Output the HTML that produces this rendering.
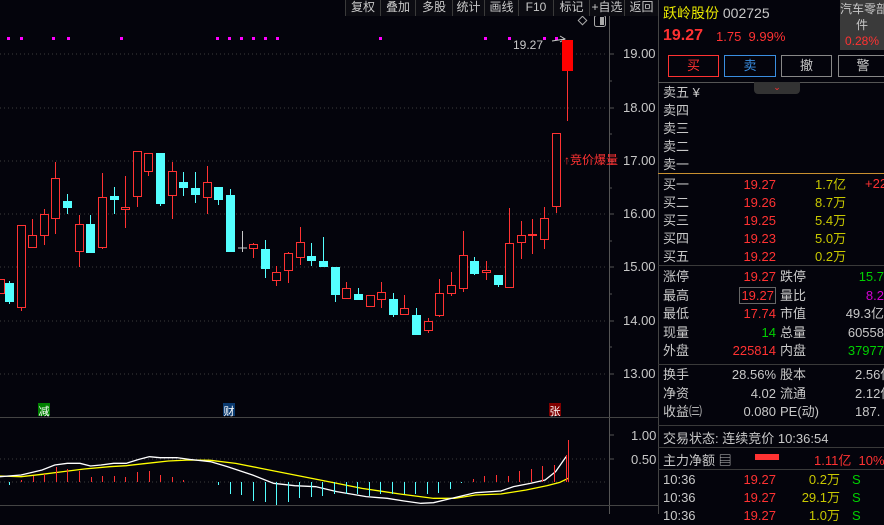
<!DOCTYPE html><html><head><meta charset="utf-8"><style>
*{margin:0;padding:0;box-sizing:border-box}
body{width:884px;height:514px;background:#04040c;overflow:hidden;position:relative;font-family:"Liberation Sans","Noto Sans CJK SC",sans-serif;font-size:13px;color:#c8c8c8}
.a{position:absolute;white-space:nowrap}
.tb{position:absolute;top:0;height:16px;font-size:12px;line-height:15px;text-align:center;color:#c8c8c8;border-left:1px solid #3a3a3a;background:#0c0c12}
.r{color:#ff3232}.g{color:#00d000}.y{color:#c8c800}
.ln{position:absolute;left:658px;width:226px;height:1px;background:#3a3a3a}
.rt{text-align:right}
</style></head><body>
<svg class="a" style="left:0;top:0" width="660" height="514">
<g stroke="#3c3c3c" stroke-dasharray="1,3">
<line x1="0" y1="54" x2="608" y2="54"/><line x1="0" y1="108" x2="608" y2="108"/><line x1="0" y1="161" x2="608" y2="161"/><line x1="0" y1="214" x2="608" y2="214"/><line x1="0" y1="267" x2="608" y2="267"/><line x1="0" y1="321" x2="608" y2="321"/><line x1="0" y1="374" x2="608" y2="374"/>
<line x1="0" y1="482" x2="608" y2="482"/><line x1="0" y1="459" x2="608" y2="459"/>
</g>
<line x1="609.5" y1="16" x2="609.5" y2="514" stroke="#555"/>
<line x1="0" y1="417.5" x2="658" y2="417.5" stroke="#444"/>
<line x1="0" y1="505.5" x2="658" y2="505.5" stroke="#444"/>
<g stroke="#555"><line x1="609" y1="54" x2="614" y2="54"/><line x1="609" y1="81" x2="612" y2="81"/><line x1="609" y1="108" x2="614" y2="108"/><line x1="609" y1="134" x2="612" y2="134"/><line x1="609" y1="161" x2="614" y2="161"/><line x1="609" y1="188" x2="612" y2="188"/><line x1="609" y1="214" x2="614" y2="214"/><line x1="609" y1="241" x2="612" y2="241"/><line x1="609" y1="267" x2="614" y2="267"/><line x1="609" y1="294" x2="612" y2="294"/><line x1="609" y1="321" x2="614" y2="321"/><line x1="609" y1="347" x2="612" y2="347"/><line x1="609" y1="374" x2="614" y2="374"/><line x1="609" y1="435" x2="614" y2="435"/><line x1="609" y1="459" x2="614" y2="459"/></g>
<g fill="#ff00ff"><rect x="7" y="37" width="3" height="3"/><rect x="20" y="37" width="3" height="3"/><rect x="52" y="37" width="3" height="3"/><rect x="67" y="37" width="3" height="3"/><rect x="120" y="37" width="3" height="3"/><rect x="216" y="37" width="3" height="3"/><rect x="228" y="37" width="3" height="3"/><rect x="240" y="37" width="3" height="3"/><rect x="252" y="37" width="3" height="3"/><rect x="264" y="37" width="3" height="3"/><rect x="276" y="37" width="3" height="3"/><rect x="379" y="37" width="3" height="3"/><rect x="484" y="37" width="3" height="3"/><rect x="508" y="37" width="3" height="3"/><rect x="543" y="37" width="3" height="3"/><rect x="555" y="37" width="3" height="3"/></g>
<svg x="0" y="395" width="660" height="119" viewBox="0 0 1568 357" preserveAspectRatio="none">
<polyline fill="none" stroke="#ffff00" stroke-width="1.3" vector-effect="non-scaling-stroke" points="0,243 50,245 100,238 150,230 200,222 260,215 300,212 350,205 400,198 450,195 500,196 560,205 620,220 700,240 780,260 860,280 950,297 1030,310 1080,310 1130,300 1190,297 1250,285 1300,272 1330,262 1350,250"/>
<polyline fill="none" stroke="#ffffff" stroke-width="1.3" vector-effect="non-scaling-stroke" points="0,245 50,240 100,225 130,210 160,205 190,205 215,213 240,210 270,205 300,205 330,193 355,185 380,188 420,188 450,193 500,200 540,215 600,240 650,265 700,272 750,275 800,290 870,305 920,310 960,318 1000,325 1030,323 1080,308 1130,293 1190,288 1220,275 1260,265 1295,255 1320,230 1345,185"/>
</svg>
<path d="M552 41 L565 39 M560 36 L565 39 L560 42" stroke="#c8c8c8" fill="none"/>
<rect x="579.5" y="17.5" width="6" height="6" transform="rotate(45 582.5 20.5)" fill="none" stroke="#aaa"/>
<rect x="594.5" y="15.5" width="11" height="11" rx="2" fill="none" stroke="#aaa"/><rect x="600" y="17" width="4" height="8" fill="#aaa"/>
</svg>
<div id="cc" class="a" style="left:0;top:0;width:660px;height:514px"></div>
<div class="tb" style="left:345px;width:35px">复权</div><div class="tb" style="left:380px;width:35px">叠加</div><div class="tb" style="left:415px;width:37px">多股</div><div class="tb" style="left:452px;width:32px">统计</div><div class="tb" style="left:484px;width:34px">画线</div><div class="tb" style="left:518px;width:35px">F10</div><div class="tb" style="left:553px;width:36px">标记</div><div class="tb" style="left:589px;width:35px">+自选</div><div class="tb" style="left:624px;width:34px">返回</div>
<div class="a" style="left:513px;top:38px;font-size:12px">19.27</div>
<div class="a r" style="left:564px;top:151px;font-size:12px">↑竞价爆量</div>
<div class="a" style="left:623px;top:46px">19.00</div><div class="a" style="left:623px;top:100px">18.00</div><div class="a" style="left:623px;top:153px">17.00</div><div class="a" style="left:623px;top:206px">16.00</div><div class="a" style="left:623px;top:259px">15.00</div><div class="a" style="left:623px;top:313px">14.00</div><div class="a" style="left:623px;top:366px">13.00</div>
<div class="a" style="left:631px;top:428px">1.00</div><div class="a" style="left:631px;top:452px">0.50</div>
<div class="a" style="left:38px;top:403px;width:12px;height:13px;background:#008000;color:#fff;font-size:11px;text-align:center">减</div>
<div class="a" style="left:223px;top:403px;width:12px;height:13px;background:#0a3a70;color:#fff;font-size:11px;text-align:center">财</div>
<div class="a" style="left:549px;top:403px;width:12px;height:13px;background:#800000;color:#fff;font-size:11px;text-align:center">张</div>
<div class="a" style="left:658px;top:0;width:1px;height:514px;background:#444"></div>
<div class="a" style="left:663px;top:3px;font-size:14px;color:#e8e800">跃岭股份 <span style="color:#c8c8c8">002725</span></div>
<div class="a" style="left:840px;top:0;width:44px;height:50px;background:#3a3a3a;font-size:12px;text-align:center;line-height:16px;padding-top:1px;overflow:hidden">汽车零部<br>件<br><span class="r">0.28%</span></div>
<div class="a r" style="left:663px;top:27px;font-size:16px;font-weight:bold">19.27</div>
<div class="a r" style="left:716px;top:29px;font-size:13px">1.75&nbsp;&nbsp;9.99%</div>
<div class="a r" style="left:668px;top:55px;width:51px;height:22px;border:1px solid #ff3232;text-align:center;line-height:20px">买</div>
<div class="a" style="left:724px;top:55px;width:52px;height:22px;border:1px solid #3a8ee0;text-align:center;line-height:20px;color:#3a8ee0">卖</div>
<div class="a" style="left:781px;top:55px;width:51px;height:22px;border:1px solid #888;text-align:center;line-height:20px">撤</div>
<div class="a" style="left:838px;top:55px;width:50px;height:22px;border:1px solid #888;text-align:center;line-height:20px">警</div>
<div class="ln" style="top:82px;background:#555"></div>
<div class="a" style="left:754px;top:82px;width:46px;height:12px;background:#333;border-radius:0 0 4px 4px;color:#ff3232;font-size:9px;text-align:center;line-height:10px">⌄</div>
<div class="a" style="left:663px;top:84px;line-height:18px">卖五 ¥<br>卖四<br>卖三<br>卖二<br>卖一</div>
<div class="ln" style="top:173px;background:#c89030"></div>
<div class="a" style="left:663px;top:176px;line-height:18px">买一<br>买二<br>买三<br>买四<br>买五</div>
<div class="a r rt" style="left:720px;top:176px;width:56px;line-height:18px">19.27<br>19.26<br>19.25<br>19.23<br>19.22</div>
<div class="a y" style="left:815px;top:176px;line-height:18px">1.7亿<br>8.7万<br>5.4万<br>5.0万<br>0.2万</div>
<div class="a r" style="left:865px;top:176px">+22</div>
<div class="ln" style="top:265px"></div>
<div class="a" style="left:663px;top:268px;line-height:18.5px">涨停<br>最高<br>最低<br>现量<br>外盘</div>
<div class="a rt" style="left:700px;top:268px;width:76px;line-height:18.5px"><span class="r">19.27</span><br><span class="r" style="border:1px solid #666;padding:0 1px">19.27</span><br><span class="r">17.74</span><br><span class="g">14</span><br><span class="r">225814</span></div>
<div class="a" style="left:780px;top:268px;line-height:18.5px">跌停<br>量比<br>市值<br>总量<br>内盘</div>
<div class="a" style="left:845px;top:268px;line-height:18.5px;width:39px;overflow:hidden;text-align:right"><span class="g">15.7</span><br><span style="color:#d000d0">8.2</span><br>49.3亿<br>60558<br><span class="g">37977</span></div>
<div class="ln" style="top:364px"></div>
<div class="a" style="left:663px;top:366px;line-height:18.5px">换手<br>净资<br>收益㈢</div>
<div class="a rt" style="left:700px;top:366px;width:76px;line-height:18.5px">28.56%<br>4.02<br>0.080</div>
<div class="a" style="left:780px;top:366px;line-height:18.5px">股本<br>流通<br>PE(动)</div>
<div class="a" style="left:855px;top:366px;line-height:18.5px">2.56亿<br>2.12亿<br>187.</div>
<div class="ln" style="top:425px"></div>
<div class="a" style="left:663px;top:428px">交易状态: 连续竞价 10:36:54</div>
<div class="ln" style="top:447px"></div>
<div class="a" style="left:663px;top:450px">主力净额 ▤</div>
<div class="a" style="left:755px;top:454px;width:24px;height:6px;background:#ff3232"></div>
<div class="a r" style="left:814px;top:450px">1.11亿&nbsp;&nbsp;10%</div>
<div class="ln" style="top:469px"></div>
<div class="a" style="left:663px;top:471px;line-height:18px">10:36<br>10:36<br>10:36</div>
<div class="a r rt" style="left:720px;top:471px;width:56px;line-height:18px">19.27<br>19.27<br>19.27</div>
<div class="a y rt" style="left:780px;top:471px;width:60px;line-height:18px">0.2万<br>29.1万<br>1.0万</div>
<div class="a g" style="left:852px;top:471px;line-height:18px">S<br>S<br>S</div>
<script>
var d=[[-4,279,294,279,294,'r'],[5,283,302,281,304,'c'],[17,225,308,225,311,'r'],[28,235,248,219,248,'r'],[40,214,236,209,245,'r'],[51,178,219,162,234,'r'],[63,201,208,194,214,'c'],[75,224,252,215,267,'r'],[86,224,253,215,253,'c'],[98,197,248,173,249,'r'],[110,196,200,187,214,'c'],[121,207,210,176,228,'r'],[133,151,197,151,207,'r'],[144,153,172,153,176,'r'],[156,153,204,153,206,'c'],[168,171,196,162,219,'r'],[179,182,188,172,196,'c'],[191,188,195,172,203,'c'],[203,182,198,166,214,'r'],[214,187,200,187,205,'c'],[226,195,252,189,252,'c'],[238,248,249,231,252,'w'],[249,244,249,243,258,'r'],[261,249,269,240,278,'c'],[272,272,281,266,286,'r'],[284,253,271,252,283,'r'],[296,242,258,227,265,'r'],[307,256,261,243,266,'c'],[319,261,267,237,267,'c'],[331,267,295,267,302,'c'],[342,288,299,282,299,'r'],[354,294,300,288,300,'c'],[366,295,307,295,307,'r'],[377,292,300,282,308,'r'],[389,299,315,293,317,'c'],[400,308,315,295,315,'r'],[412,315,335,308,335,'c'],[424,321,331,318,333,'r'],[435,293,316,279,317,'r'],[447,285,294,272,296,'r'],[459,255,289,231,292,'r'],[470,261,274,257,275,'c'],[482,270,273,261,280,'r'],[494,275,285,275,287,'c'],[505,243,288,208,288,'r'],[517,235,243,221,259,'r'],[528,234,236,219,254,'r'],[540,218,240,207,249,'r'],[552,133,207,133,213,'r'],[562,40,71,40,121,'R']];
var s='<svg width="660" height="514" xmlns="http://www.w3.org/2000/svg">';
d.forEach(function(k){var x=k[0],cx=x+4.5,t=k[5];var col=t=='c'?'#54ffff':(t=='w'?'#c8c8c8':'#ff3232');
if(t=='R')cx=x+5.5;
s+='<line x1="'+cx+'" y1="'+k[3]+'" x2="'+cx+'" y2="'+k[4]+'" stroke="'+col+'"/>';
if(t=='c')s+='<rect x="'+x+'" y="'+k[1]+'" width="9" height="'+Math.max(1,k[2]-k[1])+'" fill="'+col+'"/>';
else if(t=='R')s+='<rect x="'+x+'" y="'+k[1]+'" width="11" height="'+(k[2]-k[1])+'" fill="#ff0000"/>';
else if(t=='w')s+='<line x1="'+x+'" y1="'+k[1]+'" x2="'+(x+9)+'" y2="'+k[1]+'" stroke="'+col+'"/>';
else s+='<rect x="'+(x+.5)+'" y="'+(k[1]+.5)+'" width="8" height="'+Math.max(1,k[2]-k[1]-1)+'" fill="#04040c" stroke="'+col+'"/>';});
var m=[[9,3],[21,-2],[33,-6],[44,-8],[56,-15],[67,-13],[79,-11],[91,-5],[102,-6],[114,-6],[125,-5],[137,-10],[149,-11],[160,-7],[172,-5],[183,-2],[207,0],[218,3],[230,12],[241,13],[253,19],[265,20],[276,23],[288,20],[299,16],[311,15],[322,14],[334,12],[346,12],[357,12],[369,14],[380,12],[392,12],[404,12],[415,12],[427,12],[438,11],[450,7],[461,1],[473,-3],[484,-6],[496,-7],[508,-6],[519,-11],[531,-13],[542,-16],[554,-17],[566,-27]];
m.forEach(function(b){if(!b[1])return;var c=b[1]<0?'#ff3232':'#54ffff';s+='<line x1="'+b[0]+'.5" y1="482" x2="'+b[0]+'.5" y2="'+(482+b[1])+'" stroke="'+c+'"/>';});
s+='<line x1="568.5" y1="482" x2="568.5" y2="440" stroke="#ff3232"/></svg>';
document.getElementById('cc').innerHTML=s;
</script>
</body></html>
